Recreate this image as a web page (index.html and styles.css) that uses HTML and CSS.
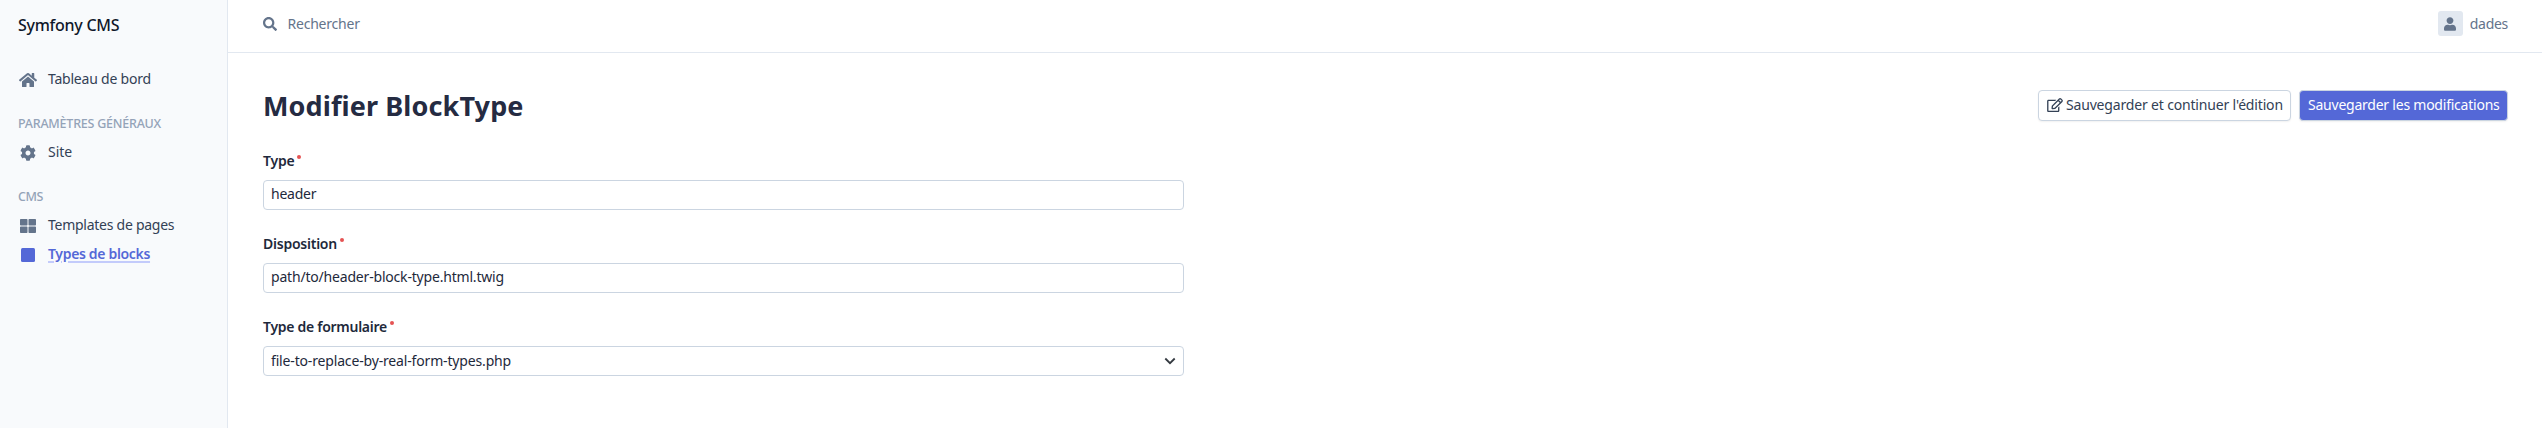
FILE: index.html
```html
<!DOCTYPE html>
<html lang="fr">
<head>
<meta charset="utf-8">
<title>Modifier BlockType</title>
<link rel="stylesheet" href="styles.css">
</head>
<body>
<div class="layout">
  <aside class="sidebar">
    <div class="brand"><span class="t-brand">Symfony CMS</span></div>
    <nav class="menu">
      <a class="item"><svg class="icon home" viewBox="0 0 576 512"><path d="M280.37 148.26L96 300.11V464a16 16 0 0 0 16 16l112.06-.29a16 16 0 0 0 15.92-16V368a16 16 0 0 1 16-16h64a16 16 0 0 1 16 16v95.64a16 16 0 0 0 16 16.05L464 480a16 16 0 0 0 16-16V300L295.67 148.26a12.19 12.19 0 0 0-15.3 0zM571.6 251.47L488 182.56V44.05a12 12 0 0 0-12-12h-56a12 12 0 0 0-12 12v72.61L318.47 43a48 48 0 0 0-61 0L4.34 251.47a12 12 0 0 0-1.6 16.9l25.5 31A12 12 0 0 0 45.15 301l235.22-193.74a12.19 12.19 0 0 1 15.3 0L530.9 301a12 12 0 0 0 16.9-1.6l25.5-31a12 12 0 0 0-1.7-16.93z"/></svg><span class="t-home">Tableau de bord</span></a>
      <div class="section"><span class="t-params">PARAMÈTRES GÉNÉRAUX</span></div>
      <a class="item"><svg class="icon" viewBox="0 0 512 512"><path d="M487.4 315.7l-42.6-24.6c4.3-23.2 4.3-47 0-70.2l42.6-24.6c4.9-2.8 7.1-8.6 5.5-14-11.1-35.6-30-67.8-54.7-94.6-3.8-4.1-10-5.1-14.8-2.3L380.8 110c-17.9-15.4-38.5-27.3-60.8-35.1V25.8c0-5.6-3.9-10.5-9.4-11.7-36.7-8.2-74.3-7.8-109.2 0-5.5 1.2-9.4 6.1-9.4 11.7V75c-22.2 7.9-42.8 19.8-60.8 35.1L88.7 85.5c-4.9-2.8-11-1.9-14.8 2.3-24.7 26.7-43.6 58.9-54.7 94.6-1.7 5.4.6 11.2 5.5 14L67.3 221c-4.3 23.2-4.3 47 0 70.2l-42.6 24.6c-4.9 2.8-7.1 8.6-5.5 14 11.1 35.6 30 67.8 54.7 94.6 3.8 4.1 10 5.1 14.8 2.3l42.6-24.6c17.9 15.4 38.5 27.3 60.8 35.1v49.2c0 5.6 3.9 10.5 9.4 11.7 36.7 8.2 74.3 7.8 109.2 0 5.500-1.200 9.400-6.100 9.400-11.700v-49.200c22.200-7.900 42.800-19.800 60.800-35.100l42.600 24.600c4.900 2.800 11 1.900 14.800-2.300 24.700-26.700 43.600-58.900 54.700-94.600 1.500-5.500-.7-11.300-5.600-14.100zM256 336c-44.100 0-80-35.900-80-80s35.900-80 80-80 80 35.900 80 80-35.900 80-80 80z"/></svg><span class="t-site">Site</span></a>
      <div class="section"><span class="t-cms">CMS</span></div>
      <a class="item"><svg class="icon" viewBox="0 0 512 512"><path d="M296 32h192c13.255 0 24 10.745 24 24v160c0 13.255-10.745 24-24 24H296c-13.255 0-24-10.745-24-24V56c0-13.255 10.745-24 24-24zm-80 0H24C10.745 32 0 42.745 0 56v160c0 13.255 10.745 24 24 24h192c13.255 0 24-10.745 24-24V56c0-13.255-10.745-24-24-24zM0 296v160c0 13.255 10.745 24 24 24h192c13.255 0 24-10.745 24-24V296c0-13.255-10.745-24-24-24H24c-13.255 0-24 10.745-24 24zm296 184h192c13.255 0 24-10.745 24-24V296c0-13.255-10.745-24-24-24H296c-13.255 0-24 10.745-24 24v160c0 13.255 10.745 24 24 24z"/></svg><span class="t-templates">Templates de pages</span></a>
      <a class="item active"><svg class="icon" viewBox="0 0 512 512"><rect x="32" y="32" width="448" height="448" rx="48"/></svg><span class="t-types">Types de blocks</span></a>
    </nav>
  </aside>
  <div class="page">
    <header class="topbar">
      <div class="search"><svg class="search-icon" viewBox="0 0 512 512"><path d="M505 442.700L405.300 343c-4.500-4.500-10.600-7-17-7H372c27.600-35.300 44-79.700 44-128C416 93.100 322.900 0 208 0S0 93.100 0 208s93.100 208 208 208c48.300 0 92.700-16.400 128-44v16.300c0 6.400 2.500 12.500 7 17l99.700 99.700c9.400 9.400 24.600 9.400 33.900 0l28.300-28.300c9.400-9.400 9.400-24.600.1-34zM208 336c-70.700 0-128-57.200-128-128 0-70.700 57.200-128 128-128 70.700 0 128 57.200 128 128 0 70.700-57.200 128-128 128z"/></svg><span class="t-search">Rechercher</span></div>
      <div class="user"><span class="avatar"><svg viewBox="0 0 448 512"><path d="M224 256c70.700 0 128-57.300 128-128S294.700 0 224 0 96 57.300 96 128s57.300 128 128 128zm89.600 32h-16.700c-22.200 10.200-46.900 16-72.900 16s-50.600-5.800-72.900-16h-16.700C60.200 288 0 348.200 0 422.400V464c0 26.500 21.500 48 48 48h352c26.500 0 48-21.500 48-48v-41.600c0-74.200-60.200-134.400-134.400-134.400z"/></svg></span><span class="t-user">dades</span></div>
    </header>
    <main class="content">
      <div class="heading">
        <h1><span class="t-title">Modifier BlockType</span></h1>
        <div class="actions">
          <button class="btn secondary"><svg viewBox="0 0 576 512"><path d="M402.300 344.900l32-32c5-5 13.700-1.500 13.700 5.700V464c0 26.500-21.500 48-48 48H48c-26.500 0-48-21.500-48-48V112c0-26.500 21.500-48 48-48h273.500c7.100 0 10.700 8.600 5.700 13.700l-32 32c-1.500 1.500-3.500 2.300-5.700 2.300H48v352h352V350.500c0-2.100.8-4.100 2.300-5.600zm156.600-201.800L296.300 405.700l-90.400 10c-26.200 2.900-48.500-19.200-45.600-45.600l10-90.400L432.900 17.100c22.900-22.900 59.900-22.900 82.700 0l43.200 43.200c22.900 22.900 22.900 60 .1 82.800zM460.100 174L402 115.900 216.200 301.800l-7.300 65.300 65.300-7.300L460.100 174zm64.800-79.700l-43.200-43.200c-4.100-4.100-10.800-4.100-14.800 0L436 82l58.100 58.100 30.900-30.900c4-4.200 4-10.800-.1-14.900z"/></svg><span class="t-continue">Sauvegarder et continuer l'édition</span></button>
          <button class="btn primary"><span class="t-save">Sauvegarder les modifications</span></button>
        </div>
      </div>
      <form class="form">
        <label><span class="t-l1">Type</span><i class="dot"></i></label>
        <div class="field"><span class="t-v1">header</span></div>
        <label><span class="t-l2">Disposition</span><i class="dot"></i></label>
        <div class="field"><span class="t-v2">path/to/header-block-type.html.twig</span></div>
        <label><span class="t-l3">Type de formulaire</span><i class="dot"></i></label>
        <div class="field select"><span class="t-v3">file-to-replace-by-real-form-types.php</span><svg viewBox="0 0 12 8"><path d="M1.300 1.500L6 6.200l4.700-4.700"/></svg></div>
      </form>
    </main>
  </div>
</div>
</body>
</html>
```
FILE: styles.css
```css
* { box-sizing: border-box; }
body { margin: 0; background: #fff; color: #1e293b; font-family: "Noto Sans", sans-serif; font-size: 14px; line-height: 20px; }
.layout { display: flex; height: 428px; overflow: hidden; }
.sidebar { width: 228px; flex: none; background: #f8fafc; border-right: 1px solid #e2e8f0; padding: 15px 18px 0; }
.brand { height: 20px; font-size: 16px; font-weight: 500; color: #0f172a; white-space: nowrap; }
.menu { padding-top: 30px; }
.item { display: flex; align-items: flex-start; height: 29px; padding-top: 4px; color: #334155; white-space: nowrap; }
.icon { width: 16px; height: 16px; margin: 3px 12px 0 2px; fill: #64748b; flex: none; }
.icon.home { width: 18px; margin: 3px 11px 0 1px; }
.section { height: 44px; padding-top: 20px; font-size: 12.5px; font-weight: 500; color: #94a3b8; white-space: nowrap; }
.active { color: #5468d7; font-weight: 600; }
.active .icon { fill: #5468d7; }
.active span { text-decoration: underline 2px #c3cbfb; text-underline-offset: 2px; }
.page { flex: 1; min-width: 0; }
.topbar { height: 53px; border-bottom: 1px solid #e2e8f0; display: flex; justify-content: space-between; padding: 0 34px 5px 35px; }
.search, .user { display: flex; align-items: center; color: #64748b; }
.search-icon { width: 14px; height: 14px; fill: #64748b; margin-right: 10.5px; }
.avatar { width: 25px; height: 25px; border-radius: 3px; background: #e2e8f0; display: grid; place-items: center; margin-right: 7px; }
.avatar svg { width: 12px; height: 14px; fill: #64748b; }
.content { padding: 37px 34px 0 35px; }
.heading { display: flex; justify-content: space-between; height: 59px; }
h1 { margin: 0; font-size: 27px; line-height: 31px; font-weight: 700; color: #252b42; }
.actions { display: flex; gap: 8px; }
.btn { height: 31px; display: flex; align-items: center; padding: 0 8px 1px; border: 1px solid #cbd5e1; border-radius: 4px; background: #fff; color: #334155; font: inherit; box-shadow: 0 1px 2px rgba(0,0,0,.06); white-space: nowrap; }
.btn svg { width: 16px; height: 14px; fill: #334155; margin-right: 3px; flex: none; }
.secondary { width: 253px; }
.primary { width: 209px; background: #5468d7; color: #fff; }
.form { width: 921px; }
label { display: flex; height: 31px; padding-top: 2px; font-weight: 600; }
.dot { width: 4px; height: 4px; border-radius: 50%; background: #e55353; margin: 4px 0 0 3px; }
.field { height: 30px; border: 1px solid #cbd5e1; border-radius: 4px; padding: 3px 7px; margin-bottom: 22px; display: flex; justify-content: space-between; }
.select { padding-top: 4px; }
.field svg { width: 12px; height: 8px; fill: none; stroke: #343a40; stroke-width: 1.8; margin: 6px 0 0; }

/* Tracking per label */
.t-brand { letter-spacing: -.26px; }
.t-home { letter-spacing: -.22px; }
.t-params { letter-spacing: -.23px; }
.t-cms { letter-spacing: -.4px; }
.t-templates { letter-spacing: -.26px; }
.t-types { letter-spacing: -.33px; }
.t-search { letter-spacing: -.22px; }
.t-user { letter-spacing: -.3px; }
.t-title { letter-spacing: .12px; }
.t-continue { letter-spacing: -.17px; }
.t-save { letter-spacing: -.23px; }
.t-l1, .t-l2 { letter-spacing: -.24px; }
.t-l3 { letter-spacing: -.28px; }
.t-v1 { letter-spacing: -.25px; }
.t-v2 { letter-spacing: -.19px; }
.t-v3 { letter-spacing: -.16px; }
```
